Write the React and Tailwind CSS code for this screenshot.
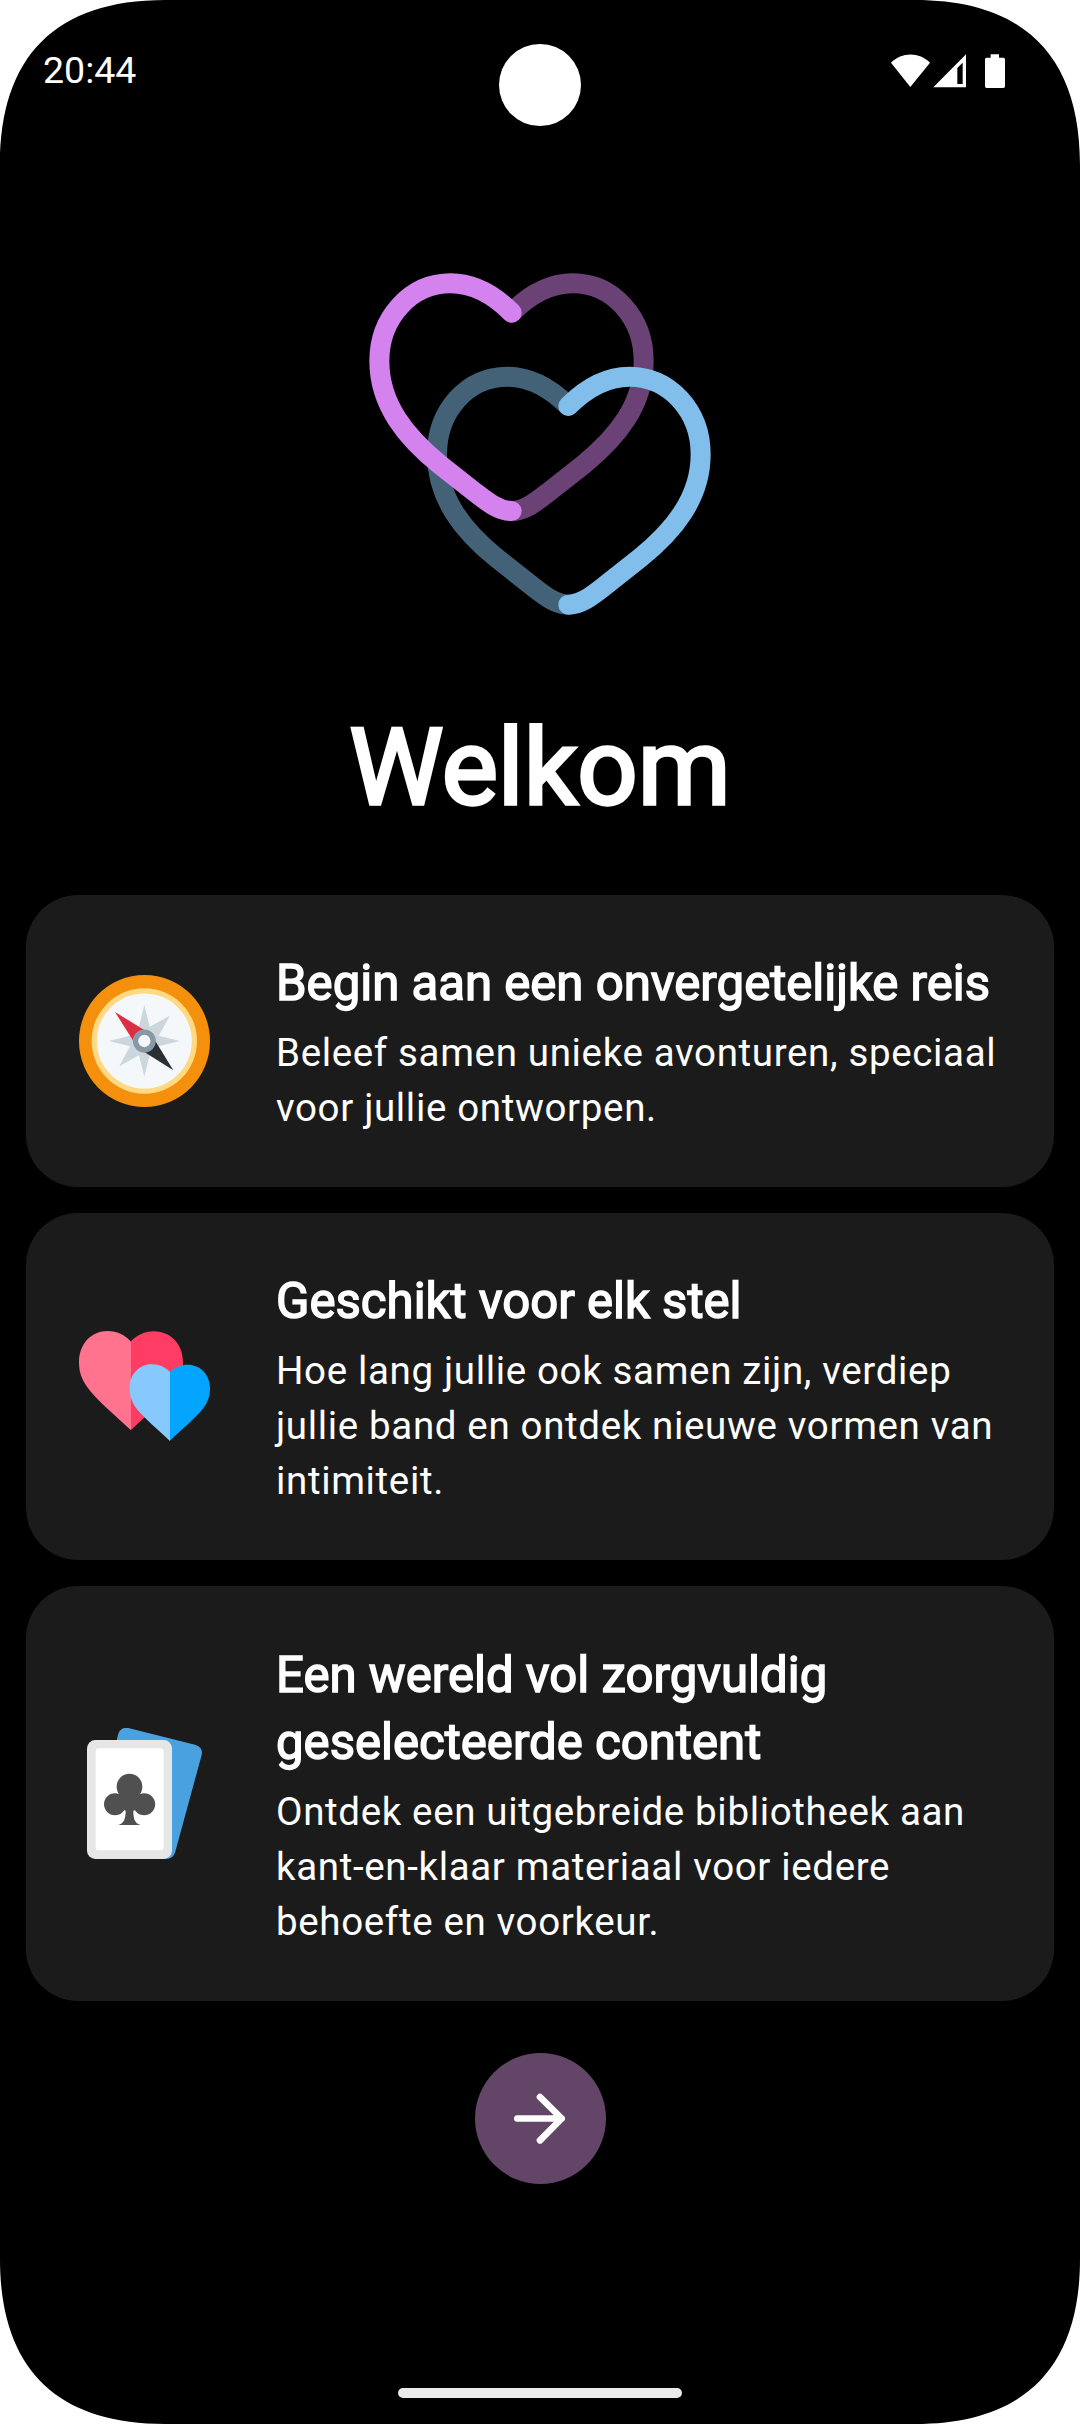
import React from "react";

const FONT = "font-['Roboto',sans-serif]";

function Compass() {
  return (
    <svg className="h-[132px] w-[131px]" viewBox="27 30 393 396" aria-hidden="true">
      <ellipse cx="223.5" cy="228" rx="196.5" ry="198" fill="#f4900c" />
      <circle cx="223" cy="228" r="158" fill="#ffd983" />
      <circle cx="223" cy="228" r="142.5" fill="#f5f8fa" />
      <path
        fill="#ccd6dd"
        d="M223 120 239 185 300 152 266 212 330 228 266 244 239 271 223 335 207 271 148 304 180 244 117 228 180 212 207 185Z"
      />
      <path fill="#dd2e44" d="M135 141 223 195 190 228Z" />
      <path fill="#292f33" d="M310 316 256 228 223 261Z" />
      <circle cx="223" cy="228" r="26.5" fill="#f5f8fa" stroke="#8899a6" strokeWidth="16" />
    </svg>
  );
}

function TwoHearts() {
  return (
    <svg className="mb-[2px] h-[110px] w-[131px]" viewBox="57 93 393 330" aria-hidden="true">
      <path fill="#ff3d64" d="M212 125C230 106 255 94 280 94C330 94 369 130 369 187C369 255 325 287 212 391Z" />
      <path fill="#ff738e" d="M213 125C195 105 170 93 143 93C95 93 57 130 57 187C57 255 100 287 213 391Z" />
      <path fill="#03a5ff" d="M329 216C345 202 362 194 383 194C420 194 450 222 450 265C450 322 412 345 329 423Z" />
      <path fill="#87c9ff" d="M330 216C316 202 298 193 275 193C238 193 209 222 209 265C209 322 247 345 330 423Z" />
    </svg>
  );
}

function Cards() {
  return (
    <svg className="h-[131px] w-[115px]" viewBox="81 54 345 393" aria-hidden="true">
      <path
        fill="#4aa1df"
        d="M165 110L174 74Q181 50 205 54L405 104Q430 112 425 135L345 428Q338 447 315 447H200Z"
      />
      <rect x="81" y="90" width="255" height="357" rx="25" fill="#e6e6e6" />
      <rect x="107" y="115" width="204" height="306" rx="11" fill="#fff" />
      <g fill="#505050">
        <circle cx="208.5" cy="230" r="38.5" />
        <circle cx="165" cy="283" r="33" />
        <circle cx="252.5" cy="283" r="33" />
        <path d="M180 250H237L250 290 220 302C220 325 224 340 242 345H175C192 340 197 325 197 302L170 290Z" />
      </g>
    </svg>
  );
}

function Logo() {
  return (
    <svg className="h-[390px] w-[400px]" viewBox="0 0 1200 1170" fill="none" strokeWidth="60" strokeLinecap="round" aria-hidden="true">
      <path stroke="#6b4275" d="M515 188C575 128 635 100 698 100C820 100 911 205 911 333C911 465 830 563 730 644C695 672 662 698 630 723C590 754 555 783 515 783" />
      <path stroke="#446277" d="M685 468C625 408 565 380 502 380C380 380 291 485 291 613C291 745 370 843 470 924C505 952 538 978 570 1003C610 1034 645 1064 685 1064" />
      <path stroke="#d482ee" d="M515 188C455 128 395 100 332 100C210 100 118 205 118 333C118 465 200 563 300 644C335 672 368 698 400 723C440 754 475 783 515 783" />
      <path stroke="#82beec" d="M685 468C745 408 805 380 868 380C990 380 1082 485 1082 613C1082 745 1000 843 900 924C865 952 832 978 800 1003C760 1034 725 1064 685 1064" />
    </svg>
  );
}

function StatusIcons() {
  return (
    <svg className="h-[35px] w-[115px]" viewBox="93 71 345 105" fill="#fff" aria-hidden="true">
      <path d="M93 97C125 64 178 64 210 97L151 170Z" />
      <path fillRule="evenodd" d="M220 171L318 72V171ZM292 113V161H308V97Z" />
      <path d="M392 72H417V82H430Q435 82 435 87V168Q435 173 430 173H380Q375 173 375 168V87Q375 82 380 82H392Z" />
    </svg>
  );
}

const corners = [
  "left-0 top-0",
  "right-0 top-0 rotate-90",
  "right-0 bottom-0 rotate-180",
  "left-0 bottom-0 -rotate-90",
];

const features = [
  {
    icon: <Compass />,
    size: "h-[292px]",
    title: ["Begin aan een onvergetelijke reis"],
    body: ["Beleef samen unieke avonturen, speciaal", "voor jullie ontworpen."],
  },
  {
    icon: <TwoHearts />,
    size: "h-[347px]",
    title: ["Geschikt voor elk stel"],
    body: ["Hoe lang jullie ook samen zijn, verdiep", "jullie band en ontdek nieuwe vormen van", "intimiteit."],
  },
  {
    icon: <Cards />,
    size: "h-[415px]",
    title: ["Een wereld vol zorgvuldig", "geselecteerde content"],
    body: ["Ontdek een uitgebreide bibliotheek aan", "kant-en-klaar materiaal voor iedere", "behoefte en voorkeur."],
  },
];

function Feature({ icon, size, title, body }) {
  return (
    <section className={`flex items-center rounded-[52px] bg-[#1b1b1b] pl-[53px] ${size}`}>
      <div className="flex w-[131px] shrink-0 justify-center">{icon}</div>
      <div className="ml-[66px] pt-[3px] whitespace-nowrap">
        <h2 className="mb-[7px] text-[49.14px] leading-[67.5px] font-normal [-webkit-text-stroke:1.5px_#fff]">
          {title.map((t) => (
            <div key={t}>{t}</div>
          ))}
        </h2>
        <p className="text-[38.5px] leading-[55px] tracking-[0.65px]">
          {body.map((t) => (
            <span key={t} className="block">{t}</span>
          ))}
        </p>
      </div>
    </section>
  );
}

export default function App() {
  return (
    <div className={`relative flex h-[2424px] w-[1080px] flex-col overflow-hidden bg-black text-white ${FONT}`}>
      {corners.map((c) => (
        <svg key={c} className={`absolute h-[165px] w-[165px] ${c}`} viewBox="0 0 165 165" aria-hidden="true">
          <path fill="#fff" d="M0 0V165C0 56 56 0 165 0Z" />
        </svg>
      ))}
      <div className="absolute top-[44px] left-[499px] size-[82px] rounded-full bg-white" />

      <header className="flex h-[142px] shrink-0 items-center justify-between pr-[74px] pl-[43px]">
        <span className="pb-[2px] text-[37.5px] leading-[43px]">20:44</span>
        <StatusIcons />
      </header>

      <div className="mt-[108px] flex justify-center">
        <Logo />
      </div>
      <h1 className="mt-[53px] text-center text-[106px] leading-[150px] font-normal [-webkit-text-stroke:3.3px_#fff]">Welkom</h1>

      <main className="mt-[52px] flex flex-col gap-[26px] px-[26px]">
        {features.map((f) => (
          <Feature key={f.title[0]} {...f} />
        ))}
      </main>

      <div className="mt-[52px] flex justify-center">
        <button className="flex size-[131px] items-center justify-center rounded-full bg-[#634568]" aria-label="Volgende">
          <svg className="mr-[2px] h-[51px] w-[51px]" viewBox="221 189 153 153" fill="none" stroke="#fff" strokeWidth="20" strokeLinecap="round" strokeLinejoin="round">
            <path d="M231 265.5H364M299 201L364 265.5L299 331" />
          </svg>
        </button>
      </div>

      <div className="mt-auto mb-[26px] h-[10px] w-[284px] self-center rounded-full bg-[#ebebeb]" />
    </div>
  );
}
